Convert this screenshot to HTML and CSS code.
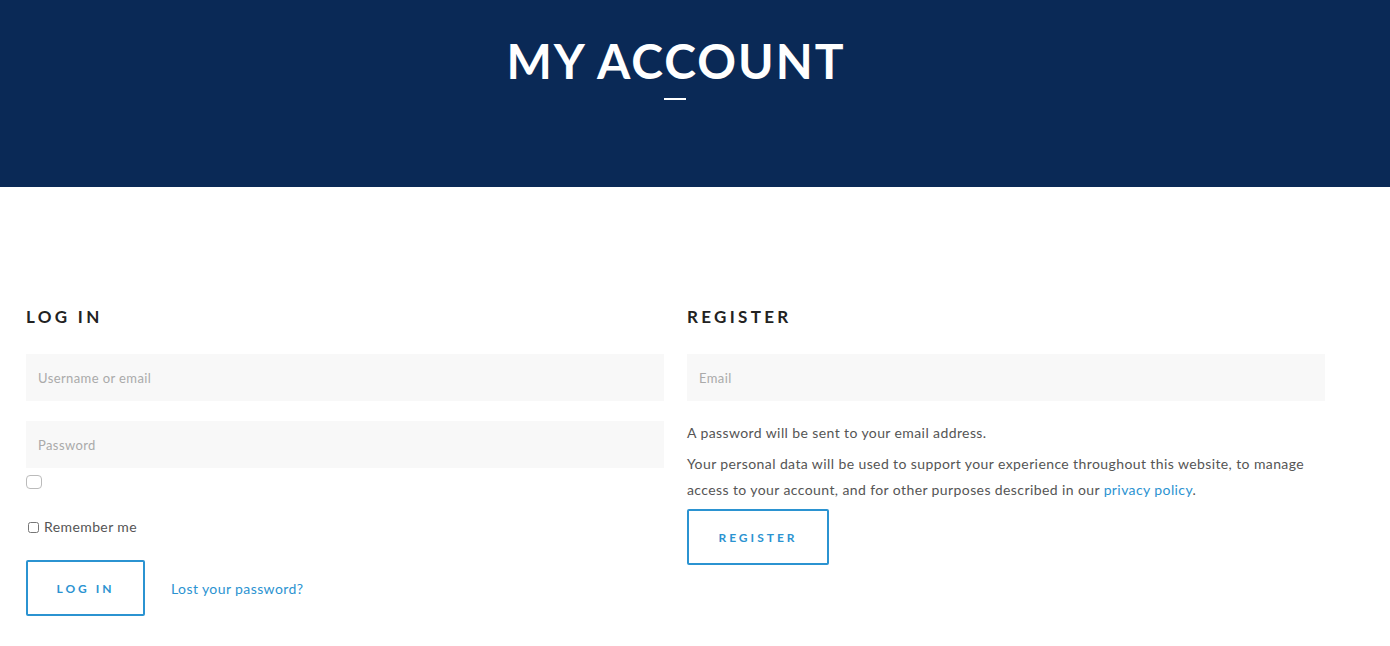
FILE: index.html
```html
<!DOCTYPE html>
<html lang="en">
<head>
  <meta charset="UTF-8">
  <title>My Account</title>
  <link rel="stylesheet" href="styles.css">
</head>
<body>
  <header class="page-title">
    <h1>My Account</h1>
    <span class="page-title-line"></span>
  </header>

  <main class="account">
    <section class="account-col">
      <h2 class="account-heading">Log in</h2>
      <form class="account-form">
        <input class="account-input" type="text" placeholder="Username or email">
        <input class="account-input" type="password" placeholder="Password">
        <span class="account-toggle"></span>
        <label class="account-remember"><input type="checkbox"> Remember me</label>
        <div class="account-actions">
          <button class="account-btn account-btn-login" type="button">Log in</button>
          <a class="account-link" href="#">Lost your password?</a>
        </div>
      </form>
    </section>

    <section class="account-col">
      <h2 class="account-heading">Register</h2>
      <form class="account-form">
        <input class="account-input" type="email" placeholder="Email">
        <p class="account-note">A password will be sent to your email address.</p>
        <p class="account-privacy">Your personal data will be used to support your experience throughout this website, to manage access to your account, and for other purposes described in our <a class="account-link" href="#">privacy policy</a>.</p>
        <button class="account-btn account-btn-register" type="button">Register</button>
      </form>
    </section>
  </main>
</body>
</html>
```

FILE: styles.css
```css
body {
  margin: 0;
  font-family: Lato, "Open Sans", sans-serif;
  color: #555;
  background: #fff;
}

.page-title {
  height: 187px;
  background: #0a2956;
  display: flex;
  flex-direction: column;
  align-items: center;
  padding: 33px 40px 0 0;
  box-sizing: border-box;
}

.page-title h1 {
  margin: 0;
  color: #fff;
  font-size: 48px;
  line-height: 56px;
  font-weight: 700;
  letter-spacing: 2px;
  text-transform: uppercase;
  padding-left: 2px;
}

.page-title-line {
  display: block;
  width: 22px;
  height: 2px;
  margin-top: 9px;
  background: #fff;
}

.account {
  display: flex;
  gap: 23px;
  padding: 118px 0 0 26px;
}

.account-col {
  width: 638px;
}

.account-heading {
  margin: 0 0 25px;
  font-size: 17px;
  line-height: 24px;
  font-weight: 700;
  letter-spacing: 3.3px;
  color: #222;
  text-transform: uppercase;
}

.account-form {
  display: flex;
  flex-direction: column;
  align-items: flex-start;
}

.account-input {
  width: 100%;
  height: 47px;
  box-sizing: border-box;
  border: 0;
  background: #f8f8f8;
  padding: 0 12px;
  font-family: inherit;
  font-size: 13px;
  letter-spacing: 0.4px;
  color: #555;
  margin: 0 0 20px;
}

.account-input::placeholder {
  color: #aaa;
}

.account-form .account-input + .account-input {
  margin-bottom: 7px;
}

.account-toggle {
  width: 14px;
  height: 12px;
  border: 1px solid #bbb;
  border-radius: 4px;
}

.account-remember {
  display: flex;
  align-items: center;
  gap: 5px;
  margin-top: 30px;
  font-size: 14px;
  line-height: 16px;
  letter-spacing: 0.4px;
  color: #555;
}

.account-remember input {
  margin: 0 0 0 2px;
  width: 11px;
  height: 11px;
}

.account-actions {
  display: flex;
  align-items: center;
  gap: 26px;
  margin-top: 25px;
}

.account-btn {
  height: 56px;
  background: #fff;
  border: 2px solid #2b93d1;
  border-radius: 2px;
  color: #2b93d1;
  font-family: inherit;
  font-size: 12px;
  font-weight: 700;
  letter-spacing: 3px;
  text-transform: uppercase;
}

.account-btn-login {
  width: 119px;
}

.account-btn-register {
  width: 142px;
}

.account-link {
  color: #2b93d1;
  text-decoration: none;
  font-size: 14px;
  letter-spacing: 0.4px;
}

.account-note {
  margin: 4px 0 0;
  font-size: 14px;
  line-height: 16px;
  letter-spacing: 0.4px;
}

.account-privacy {
  margin: 10px 0 6px;
  font-size: 14px;
  line-height: 26px;
  letter-spacing: 0.4px;
}
```
